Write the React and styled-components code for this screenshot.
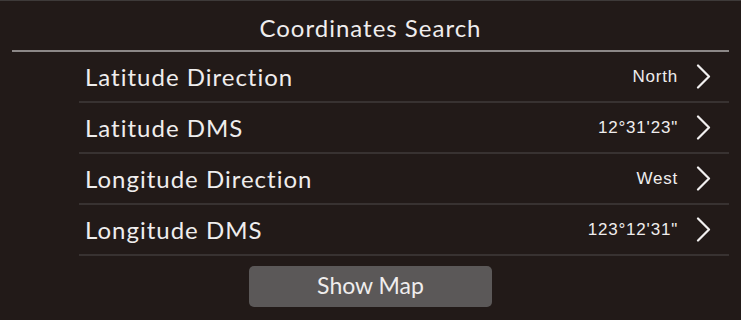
import React from "react";
import styled, { createGlobalStyle } from "styled-components";

const Global = createGlobalStyle`
  html, body { margin: 0; padding: 0; background: #221a18; }
  * { box-sizing: border-box; }
`;

const Page = styled.div`
  width: 741px;
  height: 320px;
  background: #221a18;
  border-top: 1px solid #3e3a39;
  display: flex;
  flex-direction: column;
  overflow: hidden;
  font-family: Lato, "Open Sans", sans-serif;
  color: #efeded;
`;

const Header = styled.div`
  height: 51px;
  margin: 0 12px;
  border-bottom: 2px solid #8c8887;
  display: flex;
  align-items: center;
  justify-content: center;
  font-size: 24px;
  letter-spacing: 1px;
  padding-top: 4px;
`;

const List = styled.div`
  margin: 0 12px 0 79px;
  display: flex;
  flex-direction: column;
`;

const Row = styled.div`
  height: 51px;
  border-bottom: 2px solid #383231;
  display: flex;
  align-items: center;
  justify-content: space-between;
  padding: 0 18px 0 6px;
`;

const Label = styled.span`
  font-size: 24px;
  letter-spacing: 1px;
  color: #efeded;
`;

const Right = styled.div`
  display: flex;
  align-items: center;
  gap: 18px;
`;

const Value = styled.span`
  font-family: "Liberation Sans", Arial, sans-serif;
  font-size: 17px;
  letter-spacing: 0.8px;
  color: #efeded;
`;

const Chevron = () => (
  <svg width="15" height="25" viewBox="0 0 15 25" fill="none">
    <path d="M2 1.5 L13 12.5 L2 23.5" stroke="#f2f0f0" strokeWidth="2.2" strokeLinecap="round" strokeLinejoin="round" />
  </svg>
);

const Footer = styled.div`
  display: flex;
  justify-content: center;
  padding-top: 10px;
`;

const Button = styled.button`
  width: 243px;
  height: 41px;
  border: none;
  border-radius: 5px;
  background: #5b5858;
  color: #efeded;
  font-family: Lato, "Open Sans", sans-serif;
  font-size: 23px;
  display: flex;
  align-items: center;
  justify-content: center;
  padding: 0 0 3px;
`;

const rows = [
  ["Latitude Direction", "North"],
  ["Latitude DMS", "12°31'23\""],
  ["Longitude Direction", "West"],
  ["Longitude DMS", "123°12'31\""],
];

export default function App() {
  return (
    <>
      <Global />
      <Page>
        <Header>Coordinates Search</Header>
        <List>
          {rows.map(([l, v]) => (
            <Row key={l}>
              <Label>{l}</Label>
              <Right>
                <Value>{v}</Value>
                <Chevron />
              </Right>
            </Row>
          ))}
        </List>
        <Footer>
          <Button>Show Map</Button>
        </Footer>
      </Page>
    </>
  );
}
